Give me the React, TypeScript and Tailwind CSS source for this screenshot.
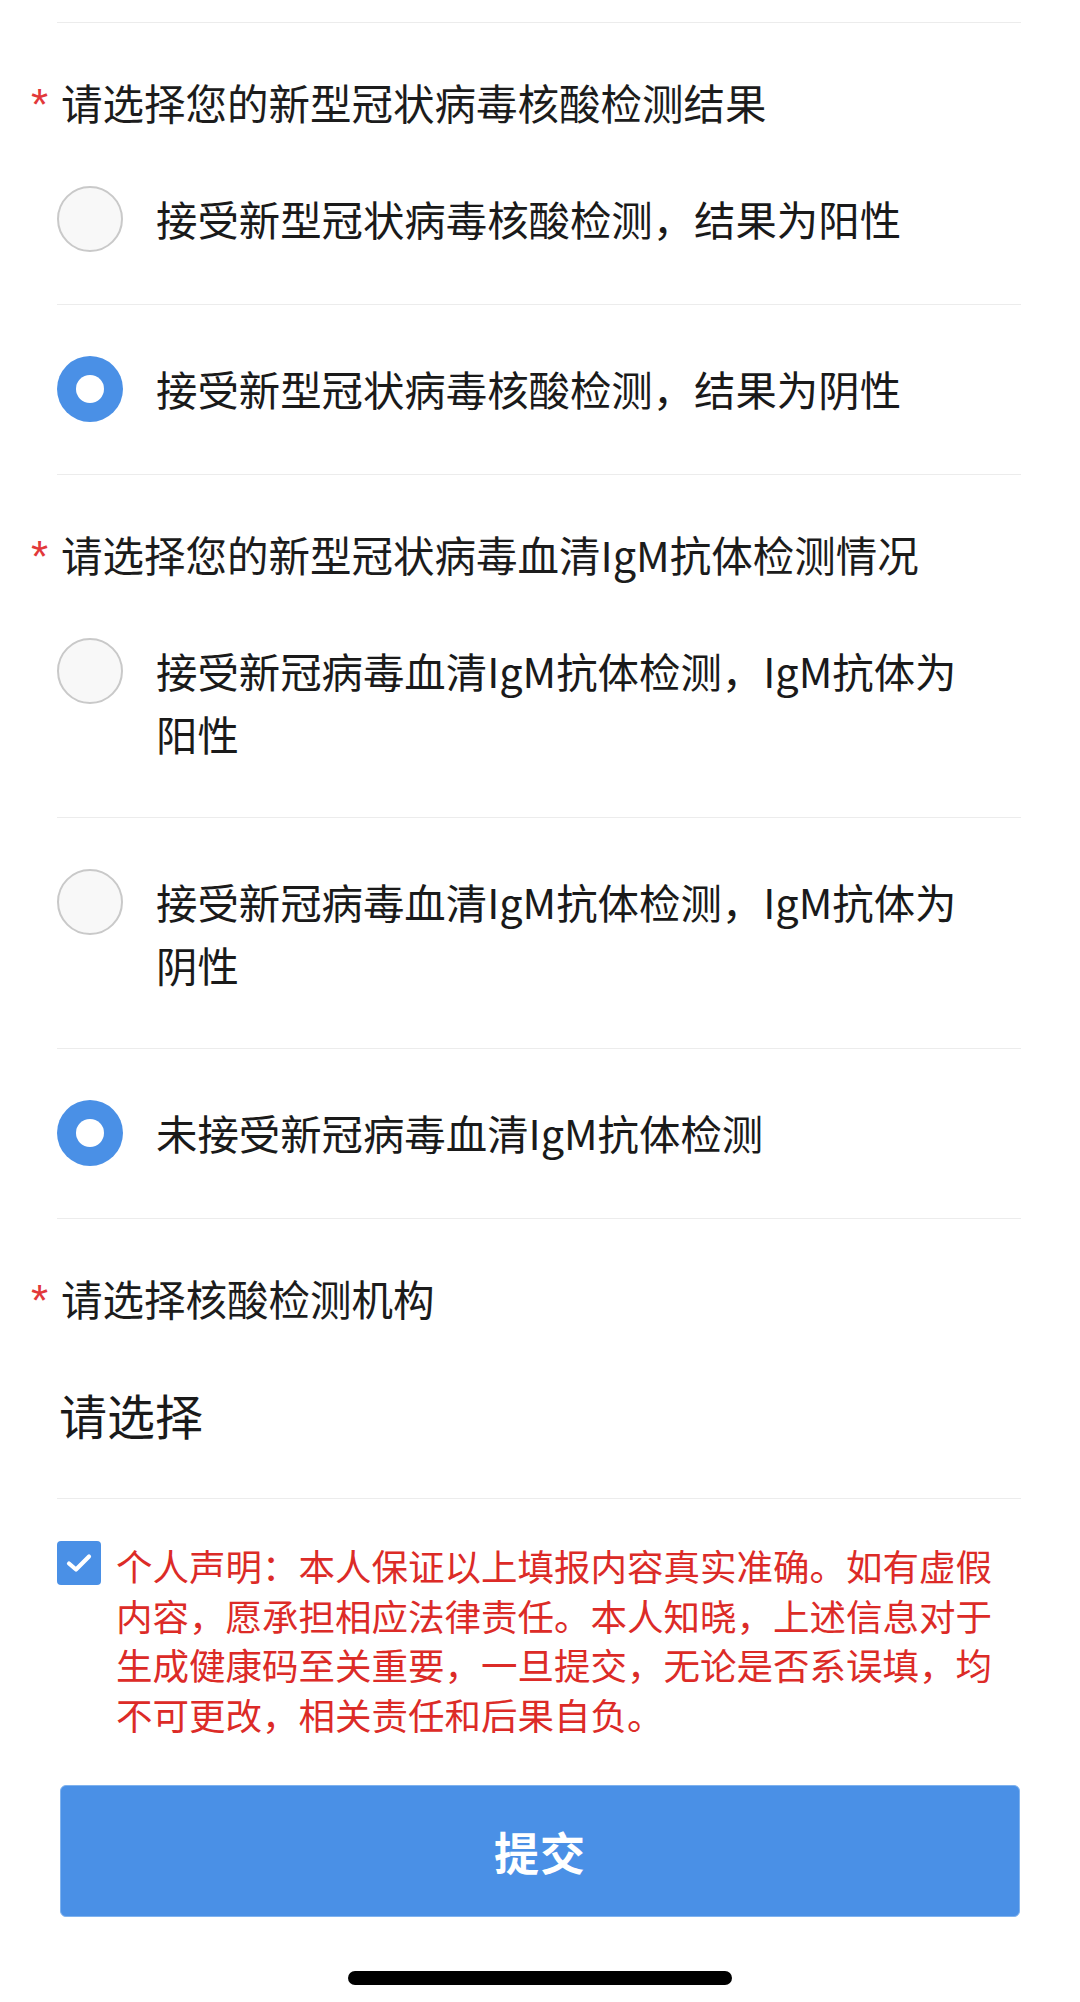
import React from "react";

const Title = ({ text }: { text: string }) => (
  <div className="h-[112px] pt-[56px] pl-[31px] flex items-start">
    <span className="w-[30px] h-[46px] text-[44px] leading-[46px] text-[#e2383a] font-[family-name:'Liberation_Sans',sans-serif] translate-y-[3px]">*</span>
    <span className="text-[41.5px] leading-[46px] text-[#1c1c1c] whitespace-nowrap">{text}</span>
  </div>
);

const Radio = ({ checked }: { checked: boolean }) =>
  checked ? (
    <div className="w-[66px] h-[66px] shrink-0 rounded-full bg-[#4a90e6] flex items-center justify-center">
      <div className="w-[28px] h-[28px] rounded-full bg-white" />
    </div>
  ) : (
    <div className="w-[66px] h-[66px] shrink-0 rounded-full border-[2.5px] border-[#c9c9c9] bg-[#f8f8f8]" />
  );

const Option = ({ lines, checked }: { lines: string[]; checked: boolean }) => (
  <div className="ml-[57px] mr-[59px] border-b border-[#ececec] pt-[52px] pb-[52px] flex items-start">
    <div className="mt-[-1px]">
      <Radio checked={checked} />
    </div>
    <div className="ml-[33px] text-[41.4px] leading-[63px] text-[#1a1a1a] whitespace-nowrap">
      {lines.map((l, i) => (
        <div key={i}>{l}</div>
      ))}
    </div>
  </div>
);

export default function App() {
  return (
    <div className="w-[1080px] h-[2002px] bg-white overflow-hidden font-[family-name:'Noto_Sans_CJK_SC','Noto_Sans',sans-serif]">
      <div className="h-[22px]" />
      <div className="ml-[57px] mr-[59px] border-b border-[#ececec]" />

      <Title text="请选择您的新型冠状病毒核酸检测结果" />
      <Option checked={false} lines={["接受新型冠状病毒核酸检测，结果为阳性"]} />
      <Option checked={true} lines={["接受新型冠状病毒核酸检测，结果为阴性"]} />

      <Title text="请选择您的新型冠状病毒血清IgM抗体检测情况" />
      <Option checked={false} lines={["接受新冠病毒血清IgM抗体检测，IgM抗体为", "阳性"]} />
      <Option checked={false} lines={["接受新冠病毒血清IgM抗体检测，IgM抗体为", "阴性"]} />
      <Option checked={true} lines={["未接受新冠病毒血清IgM抗体检测"]} />

      <Title text="请选择核酸检测机构" />
      <div className="ml-[57px] mr-[59px] border-b border-[#ececec] pt-[52px] pb-[52px]">
        <div className="text-[48px] leading-[63px] text-[#1a1a1a] ml-[2px]">请选择</div>
      </div>

      <div className="mt-[42px] ml-[57px] flex items-start">
        <div className="w-[44px] h-[44px] shrink-0 rounded-[4px] bg-[#4a90e6] flex items-center justify-center">
          <svg width="26" height="20" viewBox="0 0 26 20" fill="none">
            <path d="M3 10.5 L10 16.5 L23 3.5" stroke="white" strokeWidth="4.2" strokeLinecap="round" strokeLinejoin="round" />
          </svg>
        </div>
        <div className="ml-[15px] w-[905px] text-[36.5px] leading-[49.6px] text-[#dc2b27]">
          个人声明：本人保证以上填报内容真实准确。如有虚假内容，愿承担相应法律责任。本人知晓，上述信息对于生成健康码至关重要，一旦提交，无论是否系误填，均不可更改，相关责任和后果自负。
        </div>
      </div>

      <div className="mt-[46px] ml-[60px] w-[960px] h-[132px] rounded-[6px] bg-[#4a90e6] border border-[#7fb2ee] flex items-center justify-center">
        <span className="text-[45px] font-bold text-white tracking-[1px]">提交</span>
      </div>

      <div className="mt-[54px] mx-auto w-[384px] h-[14px] rounded-full bg-black" />
    </div>
  );
}
